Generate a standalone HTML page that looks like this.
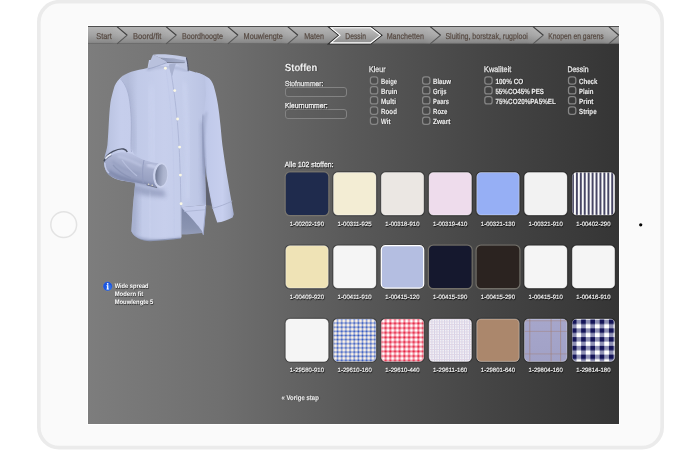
<!DOCTYPE html>
<html><head><meta charset="utf-8"><title>Shirt configurator</title>
<style>
html,body{margin:0;padding:0;background:#ffffff;}
body{width:700px;height:450px;position:relative;overflow:hidden;font-family:"Liberation Sans",sans-serif;}
#screen{position:absolute;left:88px;top:26px;width:531px;height:397.8px;box-shadow:0 0 0 1px #ffffff;background:linear-gradient(to right,#7d7d7d 0%,#6f6f6f 25%,#595959 50%,#454545 75%,#353535 100%);}
#nav{position:absolute;left:88px;top:26px;width:531px;height:18.2px;background:linear-gradient(to bottom,#4e4e4e 0,#4e4e4e 1px,#b3b3b3 1.5px,#a3a3a3 50%,#8a8a8a 90%,#7e7e7e 96%,rgba(60,60,60,0.85) 100%);}
svg{position:absolute;left:0;top:0;will-change:transform;}
text{font-family:"Liberation Sans",sans-serif;white-space:pre;text-rendering:geometricPrecision;}
.w{fill:#ffffff;stroke:#fff;stroke-width:0.15px;text-shadow:0.5px 0.5px 1px rgba(0,0,0,0.7);}
.h{fill:#ffffff;stroke:#fff;stroke-width:0.3px;text-shadow:0.5px 0.5px 1px rgba(0,0,0,0.7);}
.m{fill:#ffffff;text-shadow:0.5px 0.5px 0.8px rgba(0,0,0,0.6);}
.l{fill:#ffffff;stroke:#fff;stroke-width:0.2px;text-shadow:0.5px 0.5px 0.8px rgba(0,0,0,0.8);}
.n{fill:#3f322a;stroke:#3f322a;stroke-width:0.25px;text-shadow:0 0.7px 0.5px rgba(255,255,255,0.4);}
.inp{position:absolute;box-sizing:border-box;border:1px solid #838383;border-radius:3px;background:rgba(85,85,85,0.3);}
</style></head><body>
<svg width="700" height="450" viewBox="0 0 700 450"><rect x="38.85" y="1.75" width="623.3" height="445.9" rx="20.3" fill="#fafafa" stroke="#ebebeb" stroke-width="3.7"/><circle cx="63.7" cy="224.7" r="12.9" fill="#fbfbfb" stroke="#e3e3e3" stroke-width="1.5"/><circle cx="640.7" cy="224.8" r="1.65" fill="#050505"/></svg>
<div id="screen"></div>
<div id="nav"></div>
<div class="inp" style="left:285px;top:86.6px;width:61.7px;height:10.1px"></div>
<div class="inp" style="left:285px;top:108.7px;width:61.7px;height:10.1px"></div>
<svg width="700" height="450" viewBox="0 0 700 450">
<defs>
<linearGradient id="gWedge" x1="0" y1="0" x2="1" y2="0"><stop offset="0" stop-color="#ffffff" stop-opacity="0"/><stop offset="1" stop-color="#ffffff" stop-opacity="0.13"/></linearGradient>
<linearGradient id="gAct" x1="0" y1="0" x2="0" y2="1"><stop offset="0" stop-color="#c4c4c4"/><stop offset="1" stop-color="#8e8e8e"/></linearGradient>
<pattern id="pStripe" x="571.95" y="0" width="3.93" height="10" patternUnits="userSpaceOnUse"><rect width="3.93" height="10" fill="#474664"/><rect x="2.0" width="1.93" height="10" fill="#ffffff"/></pattern>
<pattern id="pBlue" x="333.1" y="318.5" width="4.15" height="4.15" patternUnits="userSpaceOnUse"><rect width="4.15" height="4.15" fill="#2a50b8"/><rect x="1.15" width="2.6" height="4.15" fill="#8fa1d9"/><rect y="1.15" width="4.15" height="2.6" fill="#8fa1d9"/><rect x="1.15" y="1.15" width="2.6" height="2.6" fill="#fff4e4"/></pattern>
<pattern id="pRed" x="380.6" y="318.3" width="4.67" height="4.67" patternUnits="userSpaceOnUse"><rect width="4.67" height="4.67" fill="#e51f3e"/><rect x="1.4" width="2.7" height="4.67" fill="#f48a9c"/><rect y="1.4" width="4.67" height="2.7" fill="#f48a9c"/><rect x="1.4" y="1.4" width="2.7" height="2.7" fill="#ffffff"/></pattern>
<pattern id="pLilac" x="429" y="319" width="2.5" height="2.5" patternUnits="userSpaceOnUse"><rect width="2.5" height="2.5" fill="#f5f2f6"/><rect width="0.9" height="2.5" fill="#d0d0e8"/><rect width="2.5" height="0.9" fill="#dfd4e4"/></pattern>
<linearGradient id="pCheck" x1="0" y1="0" x2="0" y2="1"><stop offset="0" stop-color="#a6a6cb"/><stop offset="1" stop-color="#a1a1c6"/></linearGradient>
<pattern id="pNavy" x="571.9" y="319.6" width="9.25" height="8.75" patternUnits="userSpaceOnUse"><rect width="9.25" height="8.75" fill="#ffffff"/><rect width="4.6" height="8.75" fill="#8e90b4"/><rect width="9.25" height="4.5" fill="#8e90b4"/><rect width="4.6" height="4.5" fill="#141458"/></pattern>
<filter id="b1" x="-20%" y="-20%" width="140%" height="140%"><feGaussianBlur stdDeviation="1"/></filter>
<filter id="b2" x="-30%" y="-30%" width="160%" height="160%"><feGaussianBlur stdDeviation="2.2"/></filter>
<filter id="b4" x="-40%" y="-40%" width="180%" height="180%"><feGaussianBlur stdDeviation="4"/></filter>
<filter id="b05" x="-20%" y="-20%" width="140%" height="140%"><feGaussianBlur stdDeviation="0.5"/></filter>
<linearGradient id="gBody" x1="128" y1="0" x2="210" y2="0" gradientUnits="userSpaceOnUse">
<stop offset="0" stop-color="#b2bbd9"/><stop offset="0.12" stop-color="#c1cae8"/><stop offset="0.45" stop-color="#c7cfec"/><stop offset="0.7" stop-color="#c3cce9"/><stop offset="0.9" stop-color="#bcc5e4"/><stop offset="1" stop-color="#b6bfde"/></linearGradient>
<linearGradient id="gRS" x1="0" y1="0" x2="1" y2="0"><stop offset="0" stop-color="#b6bfde"/><stop offset="0.35" stop-color="#c1caea"/><stop offset="0.7" stop-color="#c7cfee"/><stop offset="0.9" stop-color="#b9c2e1"/><stop offset="1" stop-color="#a3acce"/></linearGradient>
<linearGradient id="gLS" x1="0" y1="0" x2="1" y2="0"><stop offset="0" stop-color="#a5aecd"/><stop offset="0.1" stop-color="#bcc5e3"/><stop offset="0.3" stop-color="#c6ceec"/><stop offset="0.55" stop-color="#c5cdeb"/><stop offset="0.85" stop-color="#bbc4e2"/><stop offset="1" stop-color="#adb6d5"/></linearGradient>
<linearGradient id="gFA" x1="128" y1="152" x2="120" y2="186" gradientUnits="userSpaceOnUse"><stop offset="0" stop-color="#bcc4e3"/><stop offset="0.25" stop-color="#a9b1d0"/><stop offset="0.65" stop-color="#98a1c2"/><stop offset="1" stop-color="#7c86a9"/></linearGradient>
<linearGradient id="gCuffIn" x1="0" y1="0" x2="1" y2="0"><stop offset="0" stop-color="#69738e"/><stop offset="0.3" stop-color="#8e97b3"/><stop offset="0.65" stop-color="#aab2cc"/><stop offset="1" stop-color="#b4bcd6"/></linearGradient><linearGradient id="gBack" x1="0" y1="206" x2="0" y2="238" gradientUnits="userSpaceOnUse"><stop offset="0" stop-color="#7e88a7"/><stop offset="0.7" stop-color="#8a94b1"/><stop offset="1" stop-color="#99a2bd"/></linearGradient>
<clipPath id="cBody"><path d="M149,60 L147.5,68 C142,69.3 136,70.4 131.3,71.7 C127,73.2 123,75.5 120.2,78.3 L118,110 L131,150 L135,185 L133,205 L131.3,231 C133,236 140,239.6 148,239.8 C160,239.8 170,238.6 181.4,237.5 L181.4,207.2 L206.1,205.1 C206,190 204.2,150 203,120 L206,95 L205,76 C201,73.8 196,72.4 188.2,70.2 L186,59 Z"/></clipPath>
<linearGradient id="gColIn" x1="160" y1="0" x2="186" y2="0" gradientUnits="userSpaceOnUse"><stop offset="0" stop-color="#8f98b4"/><stop offset="0.5" stop-color="#9ca5c1"/><stop offset="1" stop-color="#a7b0cb"/></linearGradient>

</defs>
<polygon points="110.0,27.400000000000002 117.0,27.400000000000002 127.2,35.2 117.0,43.9 110.0,43.9" fill="url(#gWedge)"/>
<line x1="117.0" y1="26.6" x2="127.2" y2="35.2" stroke="#404040" stroke-width="1.2"/>
<line x1="127.2" y1="35.2" x2="117.0" y2="43.9" stroke="#585858" stroke-width="1.1"/>
<polygon points="159.0,27.400000000000002 166.0,27.400000000000002 176.3,35.2 166.0,43.9 159.0,43.9" fill="url(#gWedge)"/>
<line x1="166.0" y1="26.6" x2="176.3" y2="35.2" stroke="#404040" stroke-width="1.2"/>
<line x1="176.3" y1="35.2" x2="166.0" y2="43.9" stroke="#585858" stroke-width="1.1"/>
<polygon points="220.8,27.400000000000002 227.8,27.400000000000002 238.0,35.2 227.8,43.9 220.8,43.9" fill="url(#gWedge)"/>
<line x1="227.8" y1="26.6" x2="238.0" y2="35.2" stroke="#404040" stroke-width="1.2"/>
<line x1="238.0" y1="35.2" x2="227.8" y2="43.9" stroke="#585858" stroke-width="1.1"/>
<polygon points="280.7,27.400000000000002 287.7,27.400000000000002 297.9,35.2 287.7,43.9 280.7,43.9" fill="url(#gWedge)"/>
<line x1="287.7" y1="26.6" x2="297.9" y2="35.2" stroke="#404040" stroke-width="1.2"/>
<line x1="297.9" y1="35.2" x2="287.7" y2="43.9" stroke="#585858" stroke-width="1.1"/>
<polygon points="423.2,27.400000000000002 430.2,27.400000000000002 440.6,35.2 430.2,43.9 423.2,43.9" fill="url(#gWedge)"/>
<line x1="430.2" y1="26.6" x2="440.6" y2="35.2" stroke="#404040" stroke-width="1.2"/>
<line x1="440.6" y1="35.2" x2="430.2" y2="43.9" stroke="#585858" stroke-width="1.1"/>
<polygon points="526.0,27.400000000000002 533.0,27.400000000000002 543.3,35.2 533.0,43.9 526.0,43.9" fill="url(#gWedge)"/>
<line x1="533.0" y1="26.6" x2="543.3" y2="35.2" stroke="#404040" stroke-width="1.2"/>
<line x1="543.3" y1="35.2" x2="533.0" y2="43.9" stroke="#585858" stroke-width="1.1"/>
<polygon points="601.8,27.400000000000002 608.8,27.400000000000002 618.8,35.2 608.8,43.9 601.8,43.9" fill="url(#gWedge)"/>
<line x1="608.8" y1="26.6" x2="618.8" y2="35.2" stroke="#404040" stroke-width="1.2"/>
<line x1="618.8" y1="35.2" x2="608.8" y2="43.9" stroke="#585858" stroke-width="1.1"/>
<clipPath id="cAct"><polygon points="329.6,27.3 370.8,27.3 381.2,35.2 370.8,43.4 329.6,43.4 339.3,35.2"/></clipPath>
<polygon points="329.6,27.3 370.8,27.3 381.2,35.2 370.8,43.4 329.6,43.4 339.3,35.2" fill="none" stroke="#2a2a2a" stroke-width="2" stroke-linejoin="miter"/>
<polygon points="329.6,27.3 370.8,27.3 381.2,35.2 370.8,43.4 329.6,43.4 339.3,35.2" fill="url(#gAct)"/>
<polygon points="329.6,27.3 370.8,27.3 381.2,35.2 370.8,43.4 329.6,43.4 339.3,35.2" fill="none" stroke="#ffffff" stroke-width="2.1" stroke-linejoin="miter" clip-path="url(#cAct)"/>
<rect x="370.40" y="76.85" width="7.3" height="7.3" rx="2.3" fill="rgba(60,60,60,0.3)" stroke="#868686" stroke-width="1.25"/>
<rect x="370.40" y="86.65" width="7.3" height="7.3" rx="2.3" fill="rgba(60,60,60,0.3)" stroke="#868686" stroke-width="1.25"/>
<rect x="370.40" y="96.65" width="7.3" height="7.3" rx="2.3" fill="rgba(60,60,60,0.3)" stroke="#868686" stroke-width="1.25"/>
<rect x="370.40" y="106.95" width="7.3" height="7.3" rx="2.3" fill="rgba(60,60,60,0.3)" stroke="#868686" stroke-width="1.25"/>
<rect x="370.40" y="117.05" width="7.3" height="7.3" rx="2.3" fill="rgba(60,60,60,0.3)" stroke="#868686" stroke-width="1.25"/>
<rect x="422.60" y="76.85" width="7.3" height="7.3" rx="2.3" fill="rgba(60,60,60,0.3)" stroke="#868686" stroke-width="1.25"/>
<rect x="422.60" y="86.65" width="7.3" height="7.3" rx="2.3" fill="rgba(60,60,60,0.3)" stroke="#868686" stroke-width="1.25"/>
<rect x="422.60" y="96.65" width="7.3" height="7.3" rx="2.3" fill="rgba(60,60,60,0.3)" stroke="#868686" stroke-width="1.25"/>
<rect x="422.60" y="106.95" width="7.3" height="7.3" rx="2.3" fill="rgba(60,60,60,0.3)" stroke="#868686" stroke-width="1.25"/>
<rect x="422.60" y="117.05" width="7.3" height="7.3" rx="2.3" fill="rgba(60,60,60,0.3)" stroke="#868686" stroke-width="1.25"/>
<rect x="484.80" y="76.85" width="7.3" height="7.3" rx="2.3" fill="rgba(60,60,60,0.3)" stroke="#868686" stroke-width="1.25"/>
<rect x="484.80" y="86.65" width="7.3" height="7.3" rx="2.3" fill="rgba(60,60,60,0.3)" stroke="#868686" stroke-width="1.25"/>
<rect x="484.80" y="96.65" width="7.3" height="7.3" rx="2.3" fill="rgba(60,60,60,0.3)" stroke="#868686" stroke-width="1.25"/>
<rect x="568.50" y="76.85" width="7.3" height="7.3" rx="2.3" fill="rgba(60,60,60,0.3)" stroke="#868686" stroke-width="1.25"/>
<rect x="568.50" y="86.65" width="7.3" height="7.3" rx="2.3" fill="rgba(60,60,60,0.3)" stroke="#868686" stroke-width="1.25"/>
<rect x="568.50" y="96.65" width="7.3" height="7.3" rx="2.3" fill="rgba(60,60,60,0.3)" stroke="#868686" stroke-width="1.25"/>
<rect x="568.50" y="106.95" width="7.3" height="7.3" rx="2.3" fill="rgba(60,60,60,0.3)" stroke="#868686" stroke-width="1.25"/>
<rect x="285.15" y="171.95" width="43.699999999999996" height="43.699999999999996" rx="4.8" fill="none" stroke="rgba(125,121,113,0.8)" stroke-width="1.3"/>
<rect x="285.80" y="172.60" width="42.4" height="42.4" rx="4.2" fill="#1f2b4d" stroke="none" stroke-width="0.9"/>
<rect x="332.90" y="171.95" width="43.699999999999996" height="43.699999999999996" rx="4.8" fill="none" stroke="rgba(0,0,0,0.3)" stroke-width="1.3"/>
<rect x="333.55" y="172.60" width="42.4" height="42.4" rx="4.2" fill="#f3edd4" stroke="rgba(255,255,255,0.4)" stroke-width="0.9"/>
<rect x="380.65" y="171.95" width="43.699999999999996" height="43.699999999999996" rx="4.8" fill="none" stroke="rgba(0,0,0,0.3)" stroke-width="1.3"/>
<rect x="381.30" y="172.60" width="42.4" height="42.4" rx="4.2" fill="#ebe7e3" stroke="rgba(255,255,255,0.4)" stroke-width="0.9"/>
<rect x="428.40" y="171.95" width="43.699999999999996" height="43.699999999999996" rx="4.8" fill="none" stroke="rgba(0,0,0,0.3)" stroke-width="1.3"/>
<rect x="429.05" y="172.60" width="42.4" height="42.4" rx="4.2" fill="#eedcec" stroke="rgba(255,255,255,0.4)" stroke-width="0.9"/>
<rect x="476.15" y="171.95" width="43.699999999999996" height="43.699999999999996" rx="4.8" fill="none" stroke="rgba(0,0,0,0.3)" stroke-width="1.3"/>
<rect x="476.80" y="172.60" width="42.4" height="42.4" rx="4.2" fill="#96aff5" stroke="rgba(255,255,255,0.4)" stroke-width="0.9"/>
<rect x="523.90" y="171.95" width="43.699999999999996" height="43.699999999999996" rx="4.8" fill="none" stroke="rgba(0,0,0,0.3)" stroke-width="1.3"/>
<rect x="524.55" y="172.60" width="42.4" height="42.4" rx="4.2" fill="#f2f2f2" stroke="rgba(255,255,255,0.4)" stroke-width="0.9"/>
<rect x="571.65" y="171.95" width="43.699999999999996" height="43.699999999999996" rx="4.8" fill="none" stroke="rgba(0,0,0,0.3)" stroke-width="1.3"/>
<rect x="572.30" y="172.60" width="42.4" height="42.4" rx="4.2" fill="url(#pStripe)" stroke="rgba(255,255,255,0.4)" stroke-width="0.9"/>
<rect x="285.15" y="245.05" width="43.699999999999996" height="43.699999999999996" rx="4.8" fill="none" stroke="rgba(0,0,0,0.3)" stroke-width="1.3"/>
<rect x="285.80" y="245.70" width="42.4" height="42.4" rx="4.2" fill="#efe3b6" stroke="rgba(255,255,255,0.4)" stroke-width="0.9"/>
<rect x="332.90" y="245.05" width="43.699999999999996" height="43.699999999999996" rx="4.8" fill="none" stroke="rgba(0,0,0,0.3)" stroke-width="1.3"/>
<rect x="333.55" y="245.70" width="42.4" height="42.4" rx="4.2" fill="#f5f5f5" stroke="rgba(255,255,255,0.4)" stroke-width="0.9"/>
<rect x="380.65" y="245.05" width="43.699999999999996" height="43.699999999999996" rx="4.8" fill="none" stroke="rgba(0,0,0,0.3)" stroke-width="1.3"/>
<rect x="381.30" y="245.70" width="42.4" height="42.4" rx="4.2" fill="#b4bee1" stroke="#ffffff" stroke-width="1.3"/>
<rect x="428.40" y="245.05" width="43.699999999999996" height="43.699999999999996" rx="4.8" fill="none" stroke="rgba(125,121,113,0.8)" stroke-width="1.3"/>
<rect x="429.05" y="245.70" width="42.4" height="42.4" rx="4.2" fill="#15182e" stroke="none" stroke-width="0.9"/>
<rect x="476.15" y="245.05" width="43.699999999999996" height="43.699999999999996" rx="4.8" fill="none" stroke="rgba(125,121,113,0.8)" stroke-width="1.3"/>
<rect x="476.80" y="245.70" width="42.4" height="42.4" rx="4.2" fill="#2b2320" stroke="none" stroke-width="0.9"/>
<rect x="523.90" y="245.05" width="43.699999999999996" height="43.699999999999996" rx="4.8" fill="none" stroke="rgba(0,0,0,0.3)" stroke-width="1.3"/>
<rect x="524.55" y="245.70" width="42.4" height="42.4" rx="4.2" fill="#f5f5f5" stroke="rgba(255,255,255,0.4)" stroke-width="0.9"/>
<rect x="571.65" y="245.05" width="43.699999999999996" height="43.699999999999996" rx="4.8" fill="none" stroke="rgba(0,0,0,0.3)" stroke-width="1.3"/>
<rect x="572.30" y="245.70" width="42.4" height="42.4" rx="4.2" fill="#f5f5f5" stroke="rgba(255,255,255,0.4)" stroke-width="0.9"/>
<rect x="285.15" y="318.35" width="43.699999999999996" height="43.699999999999996" rx="4.8" fill="none" stroke="rgba(0,0,0,0.3)" stroke-width="1.3"/>
<rect x="285.80" y="319.00" width="42.4" height="42.4" rx="4.2" fill="#f5f5f5" stroke="rgba(255,255,255,0.4)" stroke-width="0.9"/>
<rect x="332.90" y="318.35" width="43.699999999999996" height="43.699999999999996" rx="4.8" fill="none" stroke="rgba(0,0,0,0.3)" stroke-width="1.3"/>
<rect x="333.55" y="319.00" width="42.4" height="42.4" rx="4.2" fill="url(#pBlue)" stroke="rgba(255,255,255,0.4)" stroke-width="0.9"/>
<rect x="380.65" y="318.35" width="43.699999999999996" height="43.699999999999996" rx="4.8" fill="none" stroke="rgba(0,0,0,0.3)" stroke-width="1.3"/>
<rect x="381.30" y="319.00" width="42.4" height="42.4" rx="4.2" fill="url(#pRed)" stroke="rgba(255,255,255,0.4)" stroke-width="0.9"/>
<rect x="428.40" y="318.35" width="43.699999999999996" height="43.699999999999996" rx="4.8" fill="none" stroke="rgba(0,0,0,0.3)" stroke-width="1.3"/>
<rect x="429.05" y="319.00" width="42.4" height="42.4" rx="4.2" fill="url(#pLilac)" stroke="rgba(255,255,255,0.4)" stroke-width="0.9"/>
<rect x="476.15" y="318.35" width="43.699999999999996" height="43.699999999999996" rx="4.8" fill="none" stroke="rgba(0,0,0,0.3)" stroke-width="1.3"/>
<rect x="476.80" y="319.00" width="42.4" height="42.4" rx="4.2" fill="#ab876c" stroke="rgba(255,255,255,0.4)" stroke-width="0.9"/>
<rect x="523.90" y="318.35" width="43.699999999999996" height="43.699999999999996" rx="4.8" fill="none" stroke="rgba(0,0,0,0.3)" stroke-width="1.3"/>
<rect x="524.55" y="319.00" width="42.4" height="42.4" rx="4.2" fill="url(#pCheck)" stroke="rgba(255,255,255,0.4)" stroke-width="0.9"/>
<rect x="529.30" y="319.00" width="1" height="42.4" fill="#a27a66" opacity="0.5"/>
<rect x="550.60" y="319.00" width="1" height="42.4" fill="#a27a66" opacity="0.5"/>
<rect x="560.10" y="319.00" width="1" height="42.4" fill="#a27a66" opacity="0.5"/>
<rect x="524.55" y="320.30" width="42.4" height="1" fill="#a27a66" opacity="0.38"/>
<rect x="524.55" y="330.90" width="42.4" height="1" fill="#a27a66" opacity="0.38"/>
<rect x="524.55" y="353.40" width="42.4" height="1" fill="#a27a66" opacity="0.38"/>
<rect x="571.65" y="318.35" width="43.699999999999996" height="43.699999999999996" rx="4.8" fill="none" stroke="rgba(0,0,0,0.3)" stroke-width="1.3"/>
<rect x="572.30" y="319.00" width="42.4" height="42.4" rx="4.2" fill="url(#pNavy)" stroke="rgba(255,255,255,0.4)" stroke-width="0.9"/>
<g id="shirt">
<!-- back panel visible in slit -->
<path d="M181,206.4 L181.4,234.6 C188,234.4 196,233.6 202,232.9 L203.4,235.2 L206.1,205.2 Z" fill="url(#gBack)"/>
<path d="M131.5,231 C134,238 142,241.2 150,241.2 C160,241.2 170,239.8 181,238.6 L181,236 L133,231 Z" fill="#8e98b6"/>
<!-- right sleeve -->
<path d="M196,72.2 C201,73.4 205.5,75.6 209.1,78.3 C212,81 213.8,85 214.7,89.4 C216.2,95 217.2,100 218,105 C219,111 219.6,117 220.2,122.8 C221,130 221.6,138 222.4,145 C223.6,154 225,163 226.4,172 C228.6,186 231.3,200 233.8,214.2 L232.6,217.4 C227.5,220 222.5,222 217.2,222.6 L212.6,208.5 C210,196 207,180 205,165 C203,150 202,135 202.5,120 C203,108 203,98 202,88 Z" fill="url(#gRS)"/>
<!-- body -->
<path d="M149,60 L147.5,68 C142,69.3 136,70.4 131.3,71.7 C127,73.2 123,75.5 120.2,78.3 L118,110 L131,150 L135,185 L133,205 L131.3,231 C133,236 140,239.6 148,239.8 C160,239.8 170,238.6 181.4,237.5 L181.4,207.2 L206.1,205.1 C206,190 204.2,150 203,120 L206,95 L205,76 C201,73.8 196,72.4 188.2,70.2 L186,59 Z" fill="url(#gBody)"/>
<g clip-path="url(#cBody)">
  <path d="M128,182 C140,186 152,189 164,190 L166,197 C150,197 138,194 128,191 Z" fill="#8791b3" opacity="0.65" filter="url(#b2)"/>
  <path d="M201,122 C202,140 201.5,165 203.5,205 L211,205 L211,122 Z" fill="#8993b5" opacity="0.6" filter="url(#b2)"/>
  
  <path d="M130,185 L131,235 L137,237 L138,190 Z" fill="#96a0c0" opacity="0.6" filter="url(#b2)"/>
  <path d="M131,233 C145,241.5 165,239.8 181,237 L181,243 L131,243 Z" fill="#8993b5" opacity="0.55" filter="url(#b1)"/>
  <path d="M141,190 C139,205 138,220 139,236" fill="none" stroke="#aab3d3" stroke-width="2.5" opacity="0.45" filter="url(#b2)"/>
  <path d="M150,192 C149,205 149,220 150,238" fill="none" stroke="#d5dcf7" stroke-width="3" opacity="0.35" filter="url(#b2)"/>
  <path d="M127,88 C132,105 134,130 134,152" fill="none" stroke="#a3accd" stroke-width="3.5" opacity="0.5" filter="url(#b2)"/>
  <path d="M150,85 C152,110 153,140 153,165" fill="none" stroke="#d6ddf8" stroke-width="8" opacity="0.35" filter="url(#b4)"/>
  <!-- neck shading under collar -->
  <path d="M147,70 C155,67 170,65 188,71" fill="none" stroke="#9ea7c8" stroke-width="2" opacity="0.6" filter="url(#b1)"/>
  <!-- placket -->
  <path d="M171.3,74 C174,90 176.5,110 178,130 C179.6,150 180.8,180 181.4,237" fill="none" stroke="#adb6d6" stroke-width="0.9" filter="url(#b05)"/>
  <path d="M166,70 C169,90 171,110 172.3,130 C173.5,150 174,180 174.2,238" fill="none" stroke="#c0c8e7" stroke-width="0.6" filter="url(#b05)"/>
  <path d="M184,82 C187,110 188,150 188,200" fill="none" stroke="#d3daf6" stroke-width="3" opacity="0.6" filter="url(#b2)"/>
</g>
<!-- flap -->
<path d="M181.5,207.2 L206.1,205.1 L203.3,235.3 C202.6,232 201.5,230.2 200.6,229.3 C199.4,227.4 198.2,226 197.2,225 C195,222.3 193,219.6 190.6,217.2 C188,214.5 185.5,211.5 182.6,208.8 Z" fill="#c3cbea"/>
<path d="M184,211.6 L205.6,209.7" stroke="#a9b2d2" stroke-width="0.8" fill="none" filter="url(#b05)"/>
<path d="M205.8,206 L203.2,234.8" stroke="#98a1c2" stroke-width="0.9" fill="none"/>
<!-- left sleeve -->
<path d="M126.5,73.4 C123,75 121.5,76.8 119.6,78.8 C116.5,81.8 114.8,85 113.7,89 C112.3,94 111.2,98 110.4,102.8 C109.5,110 109.2,116 108.8,122.8 C108.4,130 108,138 107.4,145 C106.6,150 105.6,153 105,155 C103.6,160 103.6,166 105.6,170 C108,175 113,178.3 119,180 C128,182 140,183 150,184.7 L158,187 C159,187.3 160,187.3 161,187 L161,163.3 C159.5,163.2 158.5,163.3 157.9,163.6 C150,162.6 142,160 136.5,156.6 C132.5,153.5 131,148 131,140 C131.5,125 131.2,108 129.2,97 C127.5,88 124,82 120.5,78.5 C122,76.5 124,74.8 126.5,73.4 Z" fill="url(#gLS)"/>
<!-- forearm shading -->
<path d="M105.5,160 C104,165 104.5,169 106.5,172 C109,176 114,178.5 120,180 C130,182.3 142,183 151,185 L159,187.2 L160,163.5 C150,162.6 141,159.5 134,155 C126,150.5 114,151 105.5,160 Z" fill="url(#gFA)" filter="url(#b05)"/>
<path d="M109,171 C118,178.5 135,181.5 158,186.5" fill="none" stroke="#7a84a7" stroke-width="2.6" opacity="0.75" filter="url(#b1)"/>
<path d="M112,161 C120,168 128,172 140,174" fill="none" stroke="#919bbd" stroke-width="2.2" opacity="0.7" filter="url(#b1)"/>
<path d="M118,156.5 C126,158.5 134,162 142,166" fill="none" stroke="#ccd4f0" stroke-width="1.8" opacity="0.7" filter="url(#b1)"/>
<path d="M147,165 C152,166 156,167 158,168" fill="none" stroke="#d0d7f2" stroke-width="3" opacity="0.8" filter="url(#b1)"/>
<path d="M104.8,163 C105,167 106.5,171 109,173" fill="none" stroke="#cbd2ee" stroke-width="1.4" opacity="0.8" filter="url(#b05)"/>
<path d="M144,160 C142.3,167 142.3,175 143.2,183.2" fill="none" stroke="#929bbe" stroke-width="0.9" filter="url(#b05)"/>
<path d="M122,160 C126,166 131,171 137,176" fill="none" stroke="#c3cbe8" stroke-width="1.2" opacity="0.6" filter="url(#b05)"/>
<path d="M113,165 C118,171 124,175 131,178" fill="none" stroke="#858fb1" stroke-width="1.2" opacity="0.6" filter="url(#b05)"/>
<!-- elbow fold -->
<path d="M104,161.3 C105.5,157 108.5,153.6 113,151.4 C117,149.5 121,148.5 123.5,149 C125.5,149.6 126.8,150.8 127.3,152" fill="none" stroke="#3b4152" stroke-width="1.35" opacity="0.9"/>
<path d="M105.2,158.6 C106.6,156.8 108.6,155.2 110.9,154.2" fill="none" stroke="#f4f6fd" stroke-width="1.3"/>
<path d="M104.2,162 C105.8,159.4 108.4,157 111.6,155.6" fill="none" stroke="#4a5064" stroke-width="0.6" opacity="0.8"/>
<!-- upper arm seam -->
<path d="M120.5,79 C124,82.5 127.3,88 129,97 C131,108 131.4,120 131.3,128 C131.2,138 130.6,146 131.5,152" fill="none" stroke="#a6afcf" stroke-width="0.9" filter="url(#b05)"/>
<!-- cuff opening -->
<ellipse cx="160.7" cy="175.1" rx="7.6" ry="12.7" fill="#cdd4ee" transform="rotate(4 160.7 175.1)"/>
<ellipse cx="161.3" cy="175.2" rx="6" ry="11" fill="url(#gCuffIn)" transform="rotate(4 161.3 175.2)"/>
<circle cx="148.6" cy="184.3" r="0.8" fill="#e8e4d0"/><circle cx="152.2" cy="185.2" r="0.8" fill="#e8e4d0"/>
<path d="M146.5,184.8 L157,187.6" stroke="#4a4e60" stroke-width="0.6"/>
<path d="M206.5,112 C204,130 203.2,152 204.8,172 C206,186 208.5,198 212.3,208" fill="none" stroke="#8791b4" stroke-width="1.2" opacity="0.5" filter="url(#b1)"/>
<!-- right cuff seam -->
<path d="M212.2,208.4 C218,207 226,204.2 232.3,201" fill="none" stroke="#a3accd" stroke-width="0.8" filter="url(#b05)"/>
<!-- right sleeve inner shadow -->
<path d="M203,115 C202,130 203,150 205.5,175" fill="none" stroke="#8690b2" stroke-width="2.4" opacity="0.7" filter="url(#b1)"/>
<path d="M205.7,176 C206.1,186 206.4,196 206.4,205 L211.6,205.8 C210.2,199 208.6,190 207.4,183 C206.8,180 206.2,178 205.6,176 Z" fill="#5f6270"/>

<!-- collar -->
<path d="M160,57.6 C168,57.8 178,58.8 186,60.4 L185.2,63.2 C179,63 172,62.8 167,62.5 Z" fill="url(#gColIn)"/>
<path d="M167,62.5 C173,62.7 179,62.8 184.6,63" stroke="#5f6477" stroke-width="0.8" fill="none" filter="url(#b05)" opacity="0.9"/>
<path d="M153,54.8 C158,54.2 163,54.2 168,54.4 C174,54.8 180,55.6 186,57 L186.2,60.6 C178,58.9 168,57.9 160,57.8 Z" fill="#c2cae5"/>
<path d="M153,54.8 C151,59 149,64 147.6,68.8 C150.5,68.4 153,67.6 156,66.6 C160,65 164,63.6 167,62.5 C164.5,60.8 162,59.2 160,57.8 C157.5,56.6 155,55.6 153,54.8 Z" fill="#b9c1dd"/>
<path d="M147.8,68.9 C153,68 160,65.2 167,62.6" stroke="#98a1c1" stroke-width="0.8" fill="none" filter="url(#b05)"/>
<path d="M186,57 C187.2,61.5 187.8,66.5 188,71.2 C184.5,69 180,66 176,63.6 C179,63.5 182.5,63.3 185.2,63.1 Z" fill="#bfc7e2"/>
<path d="M186.3,57.6 C187.6,62 188.1,66.8 188.2,71.2" stroke="#4c5268" stroke-width="1" fill="none" filter="url(#b05)"/>
<path d="M176,63.6 C174.5,67.5 173.2,72 172.4,76 L170.6,73 C169.8,70.5 169.3,67.5 169,64.6 C171,64 173.5,63.7 176,63.6 Z" fill="#a9b2d0"/>
<!-- buttons -->
<g fill="#fbf9e4">
<circle cx="165.4" cy="68.2" r="1.45"/><circle cx="174.7" cy="90.6" r="1.45"/><circle cx="177.6" cy="119" r="1.45"/><circle cx="179.6" cy="147.1" r="1.45"/><circle cx="180.4" cy="175.1" r="1.45"/><circle cx="181.1" cy="203.7" r="1.45"/>
</g>
</g>
<!-- info icon -->
<circle cx="107.65" cy="286.3" r="4.75" fill="#1b55e2" stroke="#b8a26a" stroke-opacity="0.55" stroke-width="0.6"/>
<circle cx="108.6" cy="287.4" r="2.8" fill="#3c86f4" opacity="0.5" filter="url(#b05)"/>
<rect x="107.05" y="285.3" width="1.3" height="3.9" fill="#ffffff"/><rect x="106.5" y="285.3" width="1.2" height="0.7" fill="#fff"/><rect x="106.4" y="288.7" width="2.6" height="0.7" fill="#fff"/>
<circle cx="107.7" cy="283.8" r="0.85" fill="#ffffff"/>
<text class="n" x="96.20" y="38.60" font-size="8.4" font-weight="400" textLength="15.70" lengthAdjust="spacingAndGlyphs">Start</text>
<text class="n" x="133.00" y="38.60" font-size="8.4" font-weight="400" textLength="28.30" lengthAdjust="spacingAndGlyphs">Boord/fit</text>
<text class="n" x="181.90" y="38.60" font-size="8.4" font-weight="400" textLength="41.10" lengthAdjust="spacingAndGlyphs">Boordhoogte</text>
<text class="n" x="243.60" y="38.60" font-size="8.4" font-weight="400" textLength="39.30" lengthAdjust="spacingAndGlyphs">Mouwlengte</text>
<text class="n" x="304.20" y="38.60" font-size="8.4" font-weight="400" textLength="19.80" lengthAdjust="spacingAndGlyphs">Maten</text>
<text class="n" x="345.30" y="38.60" font-size="8.4" font-weight="400" textLength="20.60" lengthAdjust="spacingAndGlyphs">Dessin</text>
<text class="n" x="386.70" y="38.60" font-size="8.4" font-weight="400" textLength="37.20" lengthAdjust="spacingAndGlyphs">Manchetten</text>
<text class="n" x="445.40" y="38.60" font-size="8.4" font-weight="400" textLength="82.50" lengthAdjust="spacingAndGlyphs">Sluiting, borstzak, rugplooi</text>
<text class="n" x="548.20" y="38.60" font-size="8.4" font-weight="400" textLength="55.40" lengthAdjust="spacingAndGlyphs">Knopen en garens</text>
<text class="w" x="285.00" y="70.60" font-size="10.4" font-weight="700" textLength="32.30" lengthAdjust="spacingAndGlyphs">Stoffen</text>
<text class="h" x="285.00" y="85.70" font-size="7.2" font-weight="400" textLength="38.30" lengthAdjust="spacingAndGlyphs">Stofnummer:</text>
<text class="h" x="285.00" y="108.10" font-size="7.2" font-weight="400" textLength="42.70" lengthAdjust="spacingAndGlyphs">Kleurnummer:</text>
<text class="h" x="369.00" y="71.50" font-size="8.2" font-weight="400" textLength="16.60" lengthAdjust="spacingAndGlyphs">Kleur</text>
<text class="h" x="484.00" y="71.50" font-size="8.2" font-weight="400" textLength="27.40" lengthAdjust="spacingAndGlyphs">Kwaliteit</text>
<text class="h" x="567.40" y="71.50" font-size="8.2" font-weight="400" textLength="21.20" lengthAdjust="spacingAndGlyphs">Dessin</text>
<text class="w" x="381.00" y="83.60" font-size="7.6" font-weight="700" textLength="16.00" lengthAdjust="spacingAndGlyphs">Beige</text>
<text class="w" x="381.00" y="93.50" font-size="7.6" font-weight="700" textLength="16.20" lengthAdjust="spacingAndGlyphs">Bruin</text>
<text class="w" x="381.00" y="103.50" font-size="7.6" font-weight="700" textLength="15.00" lengthAdjust="spacingAndGlyphs">Multi</text>
<text class="w" x="381.00" y="113.70" font-size="7.6" font-weight="700" textLength="16.00" lengthAdjust="spacingAndGlyphs">Rood</text>
<text class="w" x="381.00" y="123.80" font-size="7.6" font-weight="700" textLength="9.50" lengthAdjust="spacingAndGlyphs">Wit</text>
<text class="w" x="433.00" y="83.60" font-size="7.6" font-weight="700" textLength="18.00" lengthAdjust="spacingAndGlyphs">Blauw</text>
<text class="w" x="433.00" y="93.50" font-size="7.6" font-weight="700" textLength="13.50" lengthAdjust="spacingAndGlyphs">Grijs</text>
<text class="w" x="433.00" y="103.50" font-size="7.6" font-weight="700" textLength="16.00" lengthAdjust="spacingAndGlyphs">Paars</text>
<text class="w" x="433.00" y="113.70" font-size="7.6" font-weight="700" textLength="14.50" lengthAdjust="spacingAndGlyphs">Roze</text>
<text class="w" x="433.00" y="123.80" font-size="7.6" font-weight="700" textLength="17.50" lengthAdjust="spacingAndGlyphs">Zwart</text>
<text class="w" x="495.40" y="83.60" font-size="7.6" font-weight="700" textLength="28.00" lengthAdjust="spacingAndGlyphs">100% CO</text>
<text class="w" x="495.40" y="93.50" font-size="7.6" font-weight="700" textLength="48.60" lengthAdjust="spacingAndGlyphs">55%CO45% PES</text>
<text class="w" x="495.40" y="103.50" font-size="7.6" font-weight="700" textLength="60.60" lengthAdjust="spacingAndGlyphs">75%CO20%PA5%EL</text>
<text class="w" x="579.00" y="83.60" font-size="7.6" font-weight="700" textLength="18.40" lengthAdjust="spacingAndGlyphs">Check</text>
<text class="w" x="579.00" y="93.50" font-size="7.6" font-weight="700" textLength="14.40" lengthAdjust="spacingAndGlyphs">Plain</text>
<text class="w" x="579.00" y="103.50" font-size="7.6" font-weight="700" textLength="14.40" lengthAdjust="spacingAndGlyphs">Print</text>
<text class="w" x="579.00" y="113.70" font-size="7.6" font-weight="700" textLength="17.60" lengthAdjust="spacingAndGlyphs">Stripe</text>
<text class="h" x="284.80" y="167.00" font-size="7.4" font-weight="400" textLength="48.60" lengthAdjust="spacingAndGlyphs">Alle 102 stoffen:</text>
<text class="w" x="281.40" y="399.70" font-size="6.9" font-weight="700" textLength="37.50" lengthAdjust="spacingAndGlyphs">« Vorige stap</text>
<text class="m" x="114.70" y="288.00" font-size="6.4" font-weight="700" textLength="33.90" lengthAdjust="spacingAndGlyphs">Wide spread</text>
<text class="m" x="114.70" y="296.00" font-size="6.4" font-weight="700" textLength="28.60" lengthAdjust="spacingAndGlyphs">Modern fit</text>
<text class="m" x="114.70" y="304.30" font-size="6.4" font-weight="700" textLength="38.60" lengthAdjust="spacingAndGlyphs">Mouwlengte 5</text>
<text class="l" x="289.80" y="226.00" font-size="6.2" font-weight="400" textLength="34.20" lengthAdjust="spacingAndGlyphs">1-00202-190</text>
<text class="l" x="337.55" y="226.00" font-size="6.2" font-weight="400" textLength="34.20" lengthAdjust="spacingAndGlyphs">1-00311-925</text>
<text class="l" x="385.30" y="226.00" font-size="6.2" font-weight="400" textLength="34.20" lengthAdjust="spacingAndGlyphs">1-00318-910</text>
<text class="l" x="433.05" y="226.00" font-size="6.2" font-weight="400" textLength="34.20" lengthAdjust="spacingAndGlyphs">1-00319-410</text>
<text class="l" x="480.80" y="226.00" font-size="6.2" font-weight="400" textLength="34.20" lengthAdjust="spacingAndGlyphs">1-00321-130</text>
<text class="l" x="528.55" y="226.00" font-size="6.2" font-weight="400" textLength="34.20" lengthAdjust="spacingAndGlyphs">1-00321-910</text>
<text class="l" x="576.30" y="226.00" font-size="6.2" font-weight="400" textLength="34.20" lengthAdjust="spacingAndGlyphs">1-00402-290</text>
<text class="l" x="289.80" y="299.00" font-size="6.2" font-weight="400" textLength="34.20" lengthAdjust="spacingAndGlyphs">1-00409-920</text>
<text class="l" x="337.55" y="299.00" font-size="6.2" font-weight="400" textLength="34.20" lengthAdjust="spacingAndGlyphs">1-00411-910</text>
<text class="l" x="385.30" y="299.00" font-size="6.2" font-weight="400" textLength="34.20" lengthAdjust="spacingAndGlyphs">1-00415-120</text>
<text class="l" x="433.05" y="299.00" font-size="6.2" font-weight="400" textLength="34.20" lengthAdjust="spacingAndGlyphs">1-00415-190</text>
<text class="l" x="480.80" y="299.00" font-size="6.2" font-weight="400" textLength="34.20" lengthAdjust="spacingAndGlyphs">1-00415-290</text>
<text class="l" x="528.55" y="299.00" font-size="6.2" font-weight="400" textLength="34.20" lengthAdjust="spacingAndGlyphs">1-00415-910</text>
<text class="l" x="576.30" y="299.00" font-size="6.2" font-weight="400" textLength="34.20" lengthAdjust="spacingAndGlyphs">1-00416-910</text>
<text class="l" x="289.80" y="372.20" font-size="6.2" font-weight="400" textLength="34.20" lengthAdjust="spacingAndGlyphs">1-29580-910</text>
<text class="l" x="337.55" y="372.20" font-size="6.2" font-weight="400" textLength="34.20" lengthAdjust="spacingAndGlyphs">1-29610-160</text>
<text class="l" x="385.30" y="372.20" font-size="6.2" font-weight="400" textLength="34.20" lengthAdjust="spacingAndGlyphs">1-29610-440</text>
<text class="l" x="433.05" y="372.20" font-size="6.2" font-weight="400" textLength="34.20" lengthAdjust="spacingAndGlyphs">1-29611-160</text>
<text class="l" x="480.80" y="372.20" font-size="6.2" font-weight="400" textLength="34.20" lengthAdjust="spacingAndGlyphs">1-29801-640</text>
<text class="l" x="528.55" y="372.20" font-size="6.2" font-weight="400" textLength="34.20" lengthAdjust="spacingAndGlyphs">1-29804-160</text>
<text class="l" x="576.30" y="372.20" font-size="6.2" font-weight="400" textLength="34.20" lengthAdjust="spacingAndGlyphs">1-29814-180</text>
</svg>
</body></html>
